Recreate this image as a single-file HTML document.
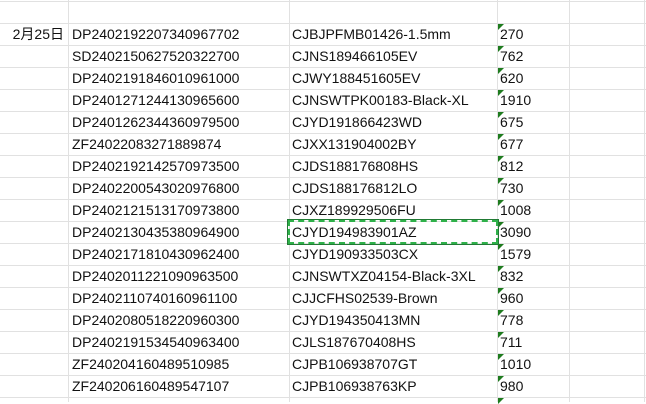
<!DOCTYPE html>
<html><head><meta charset="utf-8"><style>
body{margin:0;width:646px;height:402px;overflow:hidden;background:#fff;position:relative;font-family:"Liberation Sans","Noto Sans CJK SC",sans-serif;font-size:14px;color:#111;}
.h{position:absolute;left:0;width:646px;height:1px;background:#e1e1e1}
.v{position:absolute;top:0;height:402px;width:1px;background:#e1e1e1}
.t{position:absolute;height:22px;line-height:22px;white-space:nowrap}
.tri{position:absolute;width:0;height:0;border-top:6px solid #1e7b1e;border-right:6px solid transparent}
</style></head><body>
<div id="g"></div>
<div style="position:absolute;left:288px;top:220px;width:206px;height:20px;border:2px dashed #2fb14a;outline:1px solid #217a34;"></div>
<script>
var rows=[["DP2402192207340967702","CJBJPFMB01426-1.5mm","270"],["SD2402150627520322700","CJNS189466105EV","762"],["DP2402191846010961000","CJWY188451605EV","620"],["DP2401271244130965600","CJNSWTPK00183-Black-XL","1910"],["DP2401262344360979500","CJYD191866423WD","675"],["ZF24022083271889874","CJXX131904002BY","677"],["DP2402192142570973500","CJDS188176808HS","812"],["DP2402200543020976800","CJDS188176812LO","730"],["DP2402121513170973800","CJXZ189929506FU","1008"],["DP2402130435380964900","CJYD194983901AZ","3090"],["DP2402171810430962400","CJYD190933503CX","1579"],["DP2402011221090963500","CJNSWTXZ04154-Black-3XL","832"],["DP2402110740160961100","CJJCFHS02539-Brown","960"],["DP2402080518220960300","CJYD194350413MN","778"],["DP2402191534540963400","CJLS187670408HS","711"],["ZF240204160489510985","CJPB106938707GT","1010"],["ZF240206160489547107","CJPB106938763KP","980"]];
var h="";
for(var k=0;k<19;k++)h+='<div class="h" style="top:'+(1+22*k)+'px"></div>';
[68,289,497,569,644].forEach(function(x){h+='<div class="v" style="left:'+x+'px"></div>'});
h+='<div class="t" style="left:0;width:64px;text-align:right;top:23px">2月25日</div>';
rows.forEach(function(r,i){var y=23+22*i;
h+='<div class="t" style="left:72px;top:'+y+'px">'+r[0]+'</div>';
h+='<div class="t" style="left:292px;top:'+y+'px">'+r[1]+'</div>';
h+='<div class="t" style="left:500px;top:'+y+'px">'+r[2]+'</div>';
h+='<div class="tri" style="left:498px;top:'+(y+1)+'px"></div>';});
h+='<div class="tri" style="left:498px;top:398px"></div>';
document.getElementById("g").innerHTML=h;
</script>
</body></html>
